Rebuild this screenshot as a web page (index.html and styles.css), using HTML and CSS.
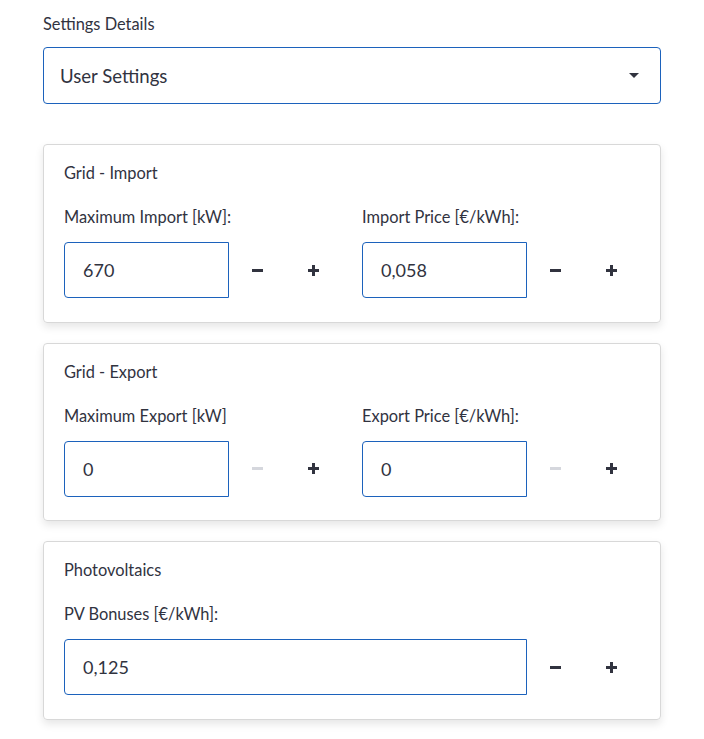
FILE: index.html
```html
<!DOCTYPE html>
<html>
<head>
<meta charset="utf-8">
<link rel="stylesheet" href="styles.css">
</head>
<body>
<div class="page">
  <div class="field-label top-label">Settings Details</div>
  <div class="select">
    <span>User Settings</span>
    <svg class="caret" width="10" height="6" viewBox="0 0 10 6"><path d="M0 0 H10 L5 5 Z" fill="#31333f"/></svg>
  </div>

  <div class="card">
    <div class="card-title">Grid - Import</div>
    <div class="row">
      <div class="col">
        <div class="field-label">Maximum Import [kW]:</div>
        <div class="num">
          <div class="input">670</div>
          <div class="btn"><span class="minus"></span></div>
          <div class="btn"><span class="plus"></span></div>
        </div>
      </div>
      <div class="col">
        <div class="field-label">Import Price [€/kWh]:</div>
        <div class="num">
          <div class="input">0,058</div>
          <div class="btn"><span class="minus"></span></div>
          <div class="btn"><span class="plus"></span></div>
        </div>
      </div>
    </div>
  </div>

  <div class="card">
    <div class="card-title">Grid - Export</div>
    <div class="row">
      <div class="col">
        <div class="field-label">Maximum Export [kW]</div>
        <div class="num">
          <div class="input">0</div>
          <div class="btn disabled"><span class="minus"></span></div>
          <div class="btn"><span class="plus"></span></div>
        </div>
      </div>
      <div class="col">
        <div class="field-label">Export Price [€/kWh]:</div>
        <div class="num">
          <div class="input">0</div>
          <div class="btn disabled"><span class="minus"></span></div>
          <div class="btn"><span class="plus"></span></div>
        </div>
      </div>
    </div>
  </div>

  <div class="card">
    <div class="card-title">Photovoltaics</div>
    <div class="field-label">PV Bonuses [€/kWh]:</div>
    <div class="num">
      <div class="input">0,125</div>
      <div class="btn"><span class="minus"></span></div>
      <div class="btn"><span class="plus"></span></div>
    </div>
  </div>
</div>
</body>
</html>
```
FILE: styles.css
```css
* { box-sizing: border-box; }
html, body { margin: 0; padding: 0; background: #fff; }
body {
  font-family: "Source Sans Pro", Lato, "Noto Sans", sans-serif;
  color: #31333f;
}
.page {
  width: 618px;
  margin-left: 43px;
  padding-top: 12px;
  display: flex;
  flex-direction: column;
}
.field-label {
  font-size: 16.4px;
  line-height: 24px;
  height: 24px;
  margin-bottom: 13px;
}
.top-label { margin-bottom: 11px; }
.select {
  height: 57px;
  border: 1px solid #1c62bc;
  border-radius: 4px;
  display: flex;
  align-items: center;
  justify-content: space-between;
  padding: 0 21px 0 16px;
  font-size: 18.6px;
  margin-bottom: 40px;
}
.caret { display: block; }
.card {
  border: 1px solid #d8d8d8;
  border-radius: 4px;
  box-shadow: 0 4px 8px rgba(0,0,0,0.10);
  padding: 16px 20px 23.5px 20px;
  margin-bottom: 20px;
  display: flex;
  flex-direction: column;
}
.card-title {
  font-size: 16.4px;
  line-height: 24px;
  margin-bottom: 20px;
}
.row {
  display: grid;
  grid-template-columns: 1fr 1fr;
  column-gap: 20px;
}
.col { display: flex; flex-direction: column; }
.num {
  display: flex;
  height: 56px;
}
.input {
  width: 165px;
  flex: none;
  border: 1px solid #1c62bc;
  border-radius: 4px 0 0 4px;
  font-size: 18px;
  display: flex;
  align-items: center;
  padding-left: 18px;
}
.card > .num .input { width: 463px; }
.btn {
  width: 56px;
  flex: none;
  display: flex;
  align-items: center;
  justify-content: center;
}
.minus {
  display: block;
  width: 11px;
  height: 3px;
  background: #31333f;
}
.disabled .minus { background: #d5d7dd; }
.plus {
  position: relative;
  display: block;
  width: 11px;
  height: 11px;
}
.plus::before, .plus::after {
  content: "";
  position: absolute;
  background: #31333f;
}
.plus::before { left: 0; top: 4px; width: 11px; height: 3px; }
.plus::after { left: 4px; top: 0; width: 3px; height: 11px; }
```
